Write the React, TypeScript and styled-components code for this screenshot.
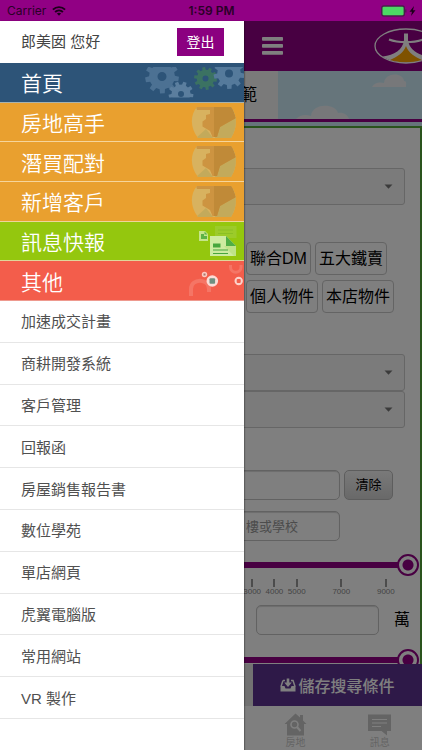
import React from "react";
import styled, { createGlobalStyle, css } from "styled-components";

const PURPLE = "#910084";
const DRAWER = 244;

const GlobalStyle = createGlobalStyle`
  *, *::before, *::after { box-sizing: border-box; }
  body { margin: 0; background: #fff; }
  body, button, input, select {
    font-family: "Liberation Sans", "Noto Sans CJK TC", sans-serif;
  }
`;

const Screen = styled.div`
  display: flex;
  flex-direction: column;
  height: 100vh;
  overflow: hidden;
`;

const StatusBar = styled.div`
  display: grid;
  grid-template-columns: 1fr auto 1fr;
  align-items: center;
  flex: none;
  height: 21px;
  padding: 0 6px 0 7px;
  background: ${PURPLE};
  color: #2a0027;
  font-family: Inter, "Liberation Sans", sans-serif;
  font-size: 12px;
`;

const StatusGroup = styled.div<{ $end?: boolean }>`
  display: flex;
  align-items: center;
  gap: 6px;
  justify-content: ${(p) => (p.$end ? "flex-end" : "flex-start")};
`;

const Clock = styled.time`
  font-weight: 600;
`;

const Stage = styled.div`
  position: relative;
  flex: 1;
  min-height: 0;
`;

const Page = styled.div`
  display: flex;
  flex-direction: column;
  height: 100%;
`;

const Backdrop = styled.div`
  position: absolute;
  inset: 0;
  background: rgba(0, 0, 0, 0.5);
`;

const Drawer = styled.aside`
  position: absolute;
  inset: 0 auto 0 0;
  width: ${DRAWER}px;
  overflow: hidden;
  background: #fff;
  box-shadow: 1px 0 1px rgba(0, 0, 0, 0.25);
`;

const Account = styled.div`
  display: flex;
  align-items: center;
  justify-content: space-between;
  height: 42px;
  padding: 0 20px 0 21px;
  color: #444;
  font-size: 15px;
  line-height: 20px;
`;

const Logout = styled.button`
  width: 47px;
  height: 28px;
  padding: 0 0 2px;
  border: 0;
  background: #8b0080;
  color: #fff;
  font-size: 14px;
`;

const MainMenu = styled.nav`
  display: grid;
  grid-auto-rows: 1fr;
  height: 238px;
`;

const MainLink = styled.a<{ $tone: string; $line: string }>`
  display: flex;
  align-items: center;
  justify-content: space-between;
  overflow: hidden;
  padding-left: 21px;
  border-bottom: 1px solid ${(p) => p.$line};
  background: ${(p) => p.$tone};
  color: #fff;
  font-family: "Noto Sans CJK TC", sans-serif;
  font-size: 21px;
  font-weight: 350;
  line-height: 38px;
  text-decoration: none;
  white-space: nowrap;
`;

const SubMenu = styled.nav`
  display: grid;
  grid-auto-rows: 1fr;
  height: 418px;
`;

const SubLink = styled.a`
  display: flex;
  align-items: center;
  padding: 0 21px 1px;
  border-bottom: 1px solid #e6e6e6;
  color: #505050;
  font-size: 15px;
  text-decoration: none;
`;

const Header = styled.header`
  display: flex;
  align-items: center;
  flex: none;
  gap: 91px;
  height: 50px;
  padding-left: ${DRAWER + 18}px;
  overflow: hidden;
  background: ${PURPLE};
`;

const MenuButton = styled.button`
  display: flex;
  flex: none;
  padding: 0;
  border: 0;
  background: none;
`;

const LogoBox = styled.div`
  display: flex;
  flex: none;
`;

const Content = styled.main`
  flex: 1;
  min-height: 0;
  overflow: hidden;
  background: #cdebf7;
`;

const Tabs = styled.div`
  display: flex;
  justify-content: space-between;
  height: 51px;
  border-bottom: 3px solid ${PURPLE};
`;

const Tab = styled.button`
  width: 278px;
  padding: 0 21px 4px 0;
  border: 0;
  background: #f4f4f4;
  color: #000;
  font-size: 16px;
  text-align: right;
`;

const CloudSvg = styled.svg`
  flex: 1;
`;

const Panel = styled.form`
  margin-top: 4px;
  padding-top: 40px;
  border: 2px solid #55a63a;
  border-left: 0;
  background: #fff;
`;

const SelectGroup = styled.div`
  display: flex;
  flex-direction: column;
  padding: 0 15px 0 17px;
`;

const SelectWrap = styled.div`
  display: grid;
  align-items: center;
  & > * { grid-area: 1 / 1; }
  & > svg { justify-self: end; margin-right: 12px; pointer-events: none; }
`;

const Select = styled.select`
  appearance: none;
  width: 100%;
  height: 37px;
  border: 1px solid #ccc;
  border-radius: 3px;
  background: #f6f6f6;
`;

const Chips = styled.div`
  display: flex;
  flex-direction: column;
  gap: 5px;
  padding: 37px 15px 41px ${DRAWER + 2}px;
`;

const ChipRow = styled.div`
  display: flex;
  gap: 4px;
`;

const Chip = styled.button`
  height: 33px;
  padding: 0 3px 4px;
  border: 1px solid #c8c8c8;
  border-radius: 4px;
  background: #fff;
  color: #000;
  font-size: 16px;
  white-space: nowrap;
`;

const Keywords = styled.div`
  display: grid;
  grid-template-columns: 1fr 49px;
  gap: 11px 4px;
  padding: 42px 27px 13px 17px;
`;

const Field = styled.input`
  width: 100%;
  min-width: 0;
  height: 30px;
  padding: 0 8px 0 ${DRAWER - 16}px;
  border: 1px solid #c4c4c4;
  border-radius: 5px;
  background: #fff;
  box-shadow: inset 0 1px 1px rgba(0, 0, 0, 0.15);
  font-size: 13px;
  &::placeholder { color: #999; opacity: 1; }
`;

const ClearButton = styled.button`
  height: 30px;
  padding: 0 0 3px;
  border: 1px solid #bbb;
  border-radius: 5px;
  background: linear-gradient(#f4f4f4, #d2d2d2);
  color: #000;
  font-size: 13px;
`;

const thumb = css`
  appearance: none;
  width: 22px;
  height: 22px;
  margin-top: -8px;
  border: 2px solid ${PURPLE};
  border-radius: 50%;
  background: radial-gradient(circle, ${PURPLE} 5px, #fff 6px);
`;

const Slider = styled.input`
  display: block;
  appearance: none;
  width: calc(100% - 1px);
  height: 22px;
  margin: 0;
  background: none;
  &::-webkit-slider-runnable-track {
    height: 6px;
    background: linear-gradient(to right, ${PURPLE} calc(100% - 11px), transparent 0);
  }
  &::-webkit-slider-thumb { ${thumb} }
`;

const Scale = styled.div`
  display: grid;
  grid-template-columns: repeat(7, 1fr);
  padding: 3px 23px 0 ${DRAWER - 3}px;
`;

const Tick = styled.span`
  display: flex;
  flex-direction: column;
  align-items: center;
  color: #8a8a8a;
  font-size: 8px;
  line-height: 10px;
  &::before {
    content: "";
    width: 2px;
    height: 8px;
    background: #999;
  }
`;

const PriceRow = styled.label`
  display: grid;
  grid-template-columns: 1fr 16px;
  align-items: center;
  gap: 15px;
  padding: 8px 10px 14px ${DRAWER + 12}px;
  color: #000;
  font-size: 16px;
  line-height: 20px;
`;

const PriceField = styled(Field)`
  padding-left: 8px;
`;

const Actions = styled.div`
  display: flex;
  flex: none;
  height: 42px;
  background: #e4e4e4;
`;

const SaveButton = styled.button`
  display: flex;
  align-items: center;
  justify-content: center;
  gap: 2px;
  flex: 1;
  margin-left: ${DRAWER + 9}px;
  padding: 0;
  border: 0;
  background: #5c3290;
  color: #fff;
  font-size: 16px;
  font-weight: 500;
`;

const BottomNav = styled.nav`
  display: grid;
  grid-template-columns: repeat(5, 1fr);
  flex: none;
  height: 44px;
  background: #fff;
`;

const NavLink = styled.a<{ $column: number }>`
  display: flex;
  flex-direction: column;
  align-items: center;
  grid-column: ${(p) => p.$column};
  padding-top: 7px;
  color: #c8c8c8;
  font-size: 10px;
  line-height: 14px;
  text-decoration: none;
`;

function gearPath(cx: number, cy: number, r: number, teeth: number, hole: number) {
  const inner = r * 0.76;
  const step = (Math.PI * 2) / teeth;
  const at = (radius: number, a: number) =>
    `${(cx + radius * Math.cos(a)).toFixed(2)} ${(cy + radius * Math.sin(a)).toFixed(2)}`;
  const pts: string[] = [];
  for (let i = 0; i < teeth; i++) {
    const a = i * step + 0.15;
    pts.push(at(inner, a - step * 0.3), at(r, a - step * 0.2), at(r, a + step * 0.2), at(inner, a + step * 0.3));
  }
  return `M${pts.join("L")}Z M${cx + hole} ${cy}a${hole} ${hole} 0 1 0 ${-2 * hole} 0a${hole} ${hole} 0 1 0 ${2 * hole} 0Z`;
}

const Art = ({ children }: { children: React.ReactNode }) => (
  <svg width="100" height="39" viewBox="0 0 100 39" aria-hidden="true">{children}</svg>
);

const GearsArt = () => (
  <Art>
    <defs><clipPath id="gears"><rect y="4" width="100" height="30.5" /></clipPath></defs>
    <g clipPath="url(#gears)" fillRule="evenodd">
      <path d={gearPath(18, 13.5, 17, 9, 4.5)} fill="#4c7193" />
      <path d={gearPath(37, 31, 12.5, 9, 3)} fill="#5b7e9e" />
      <path d={gearPath(61.5, 15.5, 11.5, 10, 3)} fill="#3b7262" />
      <path d={gearPath(85, 10.5, 15.5, 9, 4)} fill="#557a9b" />
    </g>
  </Art>
);

const MapArt = ({ id }: { id: string }) => (
  <Art>
    <defs><clipPath id={id}><path d="M53 4H87C93 12 94 24 87 35H54C46 25 46 12 53 4Z" /></clipPath></defs>
    <g clipPath={`url(#${id})`}>
      <rect x="46" y="4" width="48" height="31" fill="#d8b25f" />
      <path d="M71 4H94V35H71Z" fill="#c3aa5b" />
      <path d="M52 35L62 26L69 35Z" fill="#c3aa5b" />
      <path d="M52 4H88L92 15L83 20L76 24L73 34H68.5L66 28L58.5 23.5V18.5L62 16V12L66 11V7H53Z" fill="#cd9441" />
      <path d="M70 4H88L92 15L83 20L76 24L73 34H70Z" fill="#c08a38" />
    </g>
  </Art>
);

const NewsArt = () => (
  <Art>
    <path d="M71 4H92.5V16H71Z" fill="#9ccb2a" />
    <path d="M74 8H89M74 11.5H89" stroke="#8bc024" strokeWidth="1" />
    <path d="M55 9H61L64 12V19H55Z" fill="#c5e58a" />
    <path d="M57 12H60V17H57ZM60.5 9.5L63.5 12.5H60.5ZM60 14H63V17H60Z" fill="#5cb347" />
    <path d="M66 14H82L92 24V34H66Z" fill="#cdeba0" />
    <path d="M80 24H92V34H90Z" fill="#bfe38a" />
    <path d="M82 14L92 24H82Z" fill="#4fae46" />
    <path d="M69 21.5H76.5V25.5H69Z" fill="#46a63c" />
    <path d="M69 28H84M69 31.5H84" stroke="#46a63c" strokeWidth="1.2" />
  </Art>
);

const OtherArt = () => (
  <Art>
    <path d="M47 35V28C47 17 65 17 65 28V31" fill="none" stroke="#f57565" strokeWidth="4" />
    <path d="M86.5 4V6C86.5 13 97 13 97 6V4" fill="none" stroke="#f57565" strokeWidth="3" />
    <circle cx="60.5" cy="13.5" r="2.7" fill="#fbc9c1" />
    <rect x="59.5" y="12.5" width="2" height="2" fill="#a8766c" />
    <circle cx="68.3" cy="20" r="5.8" fill="#fcdcd6" />
    <rect x="65.5" y="17.2" width="5.6" height="5.6" rx="1" fill="#6f8f80" />
    <circle cx="94.7" cy="20" r="4.2" fill="#fcd3cc" />
    <rect x="92.7" y="18" width="4" height="4" rx="1" fill="#f0604e" />
  </Art>
);

const Caret = () => (
  <svg width="9" height="5" viewBox="0 0 9 5" aria-hidden="true"><path d="M0.5 0.5H8.5L4.5 4.8Z" fill="#777" /></svg>
);

const Logo = () => (
  <svg width="64" height="36" viewBox="0 0 64 36" role="img" aria-label="logo">
    <defs><clipPath id="logo"><ellipse cx="32" cy="18" rx="30.5" ry="16.5" /></clipPath></defs>
    <g clipPath="url(#logo)">
      <path d="M30 12H34C35 22 45 27 54 28.5V36H9V28.5C20 27 29 22 30 12Z" fill="#fff" />
      <path d="M32 18C34.5 25 41 29 48 32V36H16V32C23 29 29.5 25 32 18Z" fill="#ffa400" />
    </g>
    <path d="M15 11.5C24 15 40 15 49 11.5" fill="none" stroke="#fff" strokeWidth="2.2" />
    <path d="M32 5.5V16" stroke="#fff" strokeWidth="4" />
    <ellipse cx="32" cy="18" rx="31" ry="17" fill="none" stroke="#fff" strokeWidth="1.3" />
  </svg>
);

const MAIN_ITEMS = [
  { label: "首頁", tone: "#2d5478", line: "#a9b3ae", art: <GearsArt /> },
  { label: "房地高手", tone: "#e9a02f", line: "#f6d59b", art: <MapArt id="map-a" /> },
  { label: "潛買配對", tone: "#e9a02f", line: "#f6d59b", art: <MapArt id="map-b" /> },
  { label: "新增客戶", tone: "#e9a02f", line: "#eed49a", art: <MapArt id="map-c" /> },
  { label: "訊息快報", tone: "#94c70e", line: "#e0d79a", art: <NewsArt /> },
  { label: "其他", tone: "#f35d4b", line: "#ee9a8f", art: <OtherArt /> },
];

const SUB_ITEMS = [
  "加速成交計畫", "商耕開發系統", "客戶管理", "回報函", "房屋銷售報告書",
  "數位學苑", "單店網頁", "虎翼電腦版", "常用網站", "VR 製作",
];

const CHIPS = [["聯合DM", "五大鐵賣"], ["個人物件", "本店物件"]];

const TICKS = ["3000", "4000", "5000", "", "7000", "", "9000"];

const Dropdown = ({ label }: { label: string }) => (
  <SelectWrap>
    <Select aria-label={label} />
    <Caret />
  </SelectWrap>
);

export default function App() {
  return (
    <Screen>
      <GlobalStyle />
      <StatusBar>
        <StatusGroup>
          Carrier
          <svg width="14" height="10" viewBox="0 0 14 10" aria-label="Wi-Fi">
            <g fill="none" stroke="#1c001a" strokeWidth="1.9">
              <path d="M0.9 3.7C4.3 0.3 9.7 0.3 13.1 3.7" />
              <path d="M3.1 6C5.3 3.9 8.7 3.9 10.9 6" />
            </g>
            <path d="M4.9 7.6C6.1 6.5 7.9 6.5 9.1 7.6L7 9.8Z" fill="#1c001a" />
          </svg>
        </StatusGroup>
        <Clock>1:59 PM</Clock>
        <StatusGroup $end>
          <svg width="35" height="12" viewBox="0 0 35 12" aria-label="Battery">
            <rect x="0.8" y="1" width="22.5" height="10" rx="2" fill="#4cd964" stroke="#4b1c4c" strokeWidth="1.4" />
            <path d="M24.8 4.5V7.5" stroke="#4b1c4c" strokeWidth="1.2" />
            <path d="M33 1L28.5 6.7H31L30 11L34.5 5.2H32Z" fill="#1c001a" />
          </svg>
        </StatusGroup>
      </StatusBar>

      <Stage>
        <Page>
          <Header>
            <MenuButton aria-label="選單">
              <svg width="21" height="18" viewBox="0 0 21 18" fill="#fff">
                <rect width="21" height="3.7" rx="0.8" />
                <rect y="7" width="21" height="3.7" rx="0.8" />
                <rect y="14" width="21" height="3.7" rx="0.8" />
              </svg>
            </MenuButton>
            <LogoBox><Logo /></LogoBox>
          </Header>

          <Content>
            <Tabs>
              <Tab type="button">範</Tab>
              <CloudSvg height="48" viewBox="0 0 144 48" preserveAspectRatio="xMinYMin slice" aria-hidden="true">
                <g fill="#eef1f5">
                  <path d="M94 16C97 11 102 11 106 12C107 1 125 1 126 10C129 10 128 13 128 16Z" />
                  <path d="M18 48C22 44 27 43 33 45C34 32 57 32 60 42C65 41 70 44 71 48Z" />
                </g>
              </CloudSvg>
            </Tabs>
            <Panel>
              <SelectGroup><Dropdown label="類別" /></SelectGroup>
              <Chips>
                {CHIPS.map((row) => (
                  <ChipRow key={row[0]}>
                    {row.map((c) => <Chip type="button" key={c}>{c}</Chip>)}
                  </ChipRow>
                ))}
              </Chips>
              <SelectGroup>
                <Dropdown label="縣市" />
                <Dropdown label="區域" />
              </SelectGroup>
              <Keywords>
                <Field aria-label="關鍵字" />
                <ClearButton type="button">清除</ClearButton>
                <Field aria-label="樓或學校" placeholder="樓或學校" />
              </Keywords>
              <Slider type="range" aria-label="總價" min={0} max={10000} defaultValue={10000} />
              <Scale>
                {TICKS.map((t, i) => (t ? <Tick key={i}>{t}</Tick> : <span key={i} />))}
              </Scale>
              <PriceRow>
                <PriceField />
                萬
              </PriceRow>
              <Slider type="range" aria-label="坪數" min={0} max={100} defaultValue={100} />
            </Panel>
          </Content>

          <Actions>
            <SaveButton type="button">
              <svg width="16" height="14" viewBox="0 0 16 14" aria-hidden="true">
                <path d="M3 2.5H5M11 2.5H13L15 8.5M3 2.5L1 8.5" fill="none" stroke="#fff" strokeWidth="1.5" />
                <path d="M0.5 8H4.5L5.5 10.5H10.5L11.5 8H15.5V13.5H0.5Z" fill="#fff" />
                <path d="M6.7 0.5H9.3V4.5H11.8L8 9L4.2 4.5H6.7Z" fill="#fff" />
              </svg>
              儲存搜尋條件
            </SaveButton>
          </Actions>
          <BottomNav>
            <NavLink href="#house" $column={4}>
              <svg width="23" height="23" viewBox="0 0 23 23" aria-hidden="true">
                <path d="M11.5 0.5L16 4.5V2H19V7.5L22.5 11H20V22.5H3V11H0.5Z" fill="#c8c8c8" />
                <circle cx="10.5" cy="11.5" r="3.5" fill="none" stroke="#fff" strokeWidth="1.6" />
                <path d="M13 14L16.5 18" stroke="#fff" strokeWidth="2" />
              </svg>
              房地
            </NavLink>
            <NavLink href="#news" $column={5}>
              <svg width="23" height="23" viewBox="0 0 23 23" aria-hidden="true">
                <path d="M0 1.5H23V18H19V22.5L13.5 18H0Z" fill="#c8c8c8" />
                <path d="M4 6.5H19M4 10H19M4 13.5H13" stroke="#fff" strokeWidth="1.2" />
              </svg>
              訊息
            </NavLink>
          </BottomNav>
        </Page>

        <Backdrop />

        <Drawer>
          <Account>
            <span>郎美囡 您好</span>
            <Logout type="button">登出</Logout>
          </Account>
          <MainMenu>
            {MAIN_ITEMS.map((m) => (
              <MainLink key={m.label} href="#main" $tone={m.tone} $line={m.line}>
                {m.label}
                {m.art}
              </MainLink>
            ))}
          </MainMenu>
          <SubMenu>
            {SUB_ITEMS.map((s) => <SubLink key={s} href="#sub">{s}</SubLink>)}
          </SubMenu>
        </Drawer>
      </Stage>
    </Screen>
  );
}
